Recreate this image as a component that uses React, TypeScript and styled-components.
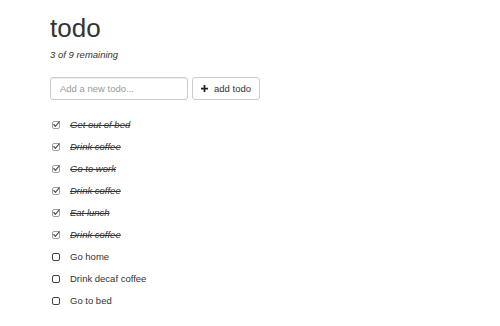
import React, { useState } from 'react'
import styled, { createGlobalStyle } from 'styled-components'

const GlobalStyle = createGlobalStyle`
  html, body {
    margin: 0;
    padding: 0;
    background: #fff;
  }
  body {
    font-family: "Liberation Sans", Arial, Helvetica, sans-serif;
    color: #333;
  }
`

type Todo = { text: string; done: boolean }

const initialTodos: Todo[] = [
  { text: 'Get out of bed', done: true },
  { text: 'Drink coffee', done: true },
  { text: 'Go to work', done: true },
  { text: 'Drink coffee', done: true },
  { text: 'Eat lunch', done: true },
  { text: 'Drink coffee', done: true },
  { text: 'Go home', done: false },
  { text: 'Drink decaf coffee', done: false },
  { text: 'Go to bed', done: false },
]

export default function App() {
  const [todos, setTodos] = useState<Todo[]>(initialTodos)
  const [draft, setDraft] = useState('')

  const remaining = todos.filter((t) => !t.done).length

  const toggle = (i: number) =>
    setTodos(todos.map((t, j) => (j === i ? { ...t, done: !t.done } : t)))

  const add = (e: React.FormEvent) => {
    e.preventDefault()
    if (!draft.trim()) return
    setTodos([...todos, { text: draft.trim(), done: false }])
    setDraft('')
  }

  return (
    <>
      <GlobalStyle />
      <Container>
        <Title>todo</Title>
        <Remaining>
          {remaining} of {todos.length} remaining
        </Remaining>
        <AddForm onSubmit={add}>
          <TodoInput
            placeholder="Add a new todo..."
            value={draft}
            onChange={(e) => setDraft(e.target.value)}
          />
          <AddButton type="submit">
            <PlusIcon viewBox="0 0 8 8">
              <path d="M3 0h2v3h3v2H5v3H3V5H0V3h3z" fill="#222" />
            </PlusIcon>
            add todo
          </AddButton>
        </AddForm>
        <TodoList>
          {todos.map((todo, i) => (
            <TodoRow key={i} onClick={() => toggle(i)}>
              <Box $checked={todo.done}>
                {todo.done && (
                  <CheckMark viewBox="0 0 10 10">
                    <path
                      d="M1.6 4.8 L3.8 7 L8.4 1.6"
                      fill="none"
                      stroke="#555"
                      strokeWidth="1.4"
                    />
                  </CheckMark>
                )}
              </Box>
              <TodoText $done={todo.done}>{todo.text}</TodoText>
            </TodoRow>
          ))}
        </TodoList>
      </Container>
    </>
  )
}

const Container = styled.div`
  padding: 13px 0 0 50px;
`

const Title = styled.h1`
  margin: 0;
  font-size: 26px;
  line-height: 30px;
  font-weight: 400;
  color: #333;
`

const Remaining = styled.p`
  margin: 5px 0 0;
  font-size: 9.5px;
  line-height: 13px;
  font-style: italic;
  color: #333;
`

const AddForm = styled.form`
  display: flex;
  gap: 4px;
  margin-top: 16px;
`

const TodoInput = styled.input`
  box-sizing: border-box;
  width: 138px;
  height: 23px;
  padding: 0 9px;
  border: 1px solid #ccc;
  border-radius: 3px;
  box-shadow: inset 0 1px 1px rgba(0, 0, 0, 0.075);
  font-family: inherit;
  font-size: 9.5px;
  color: #555;
  outline: none;

  &::placeholder {
    color: #999;
  }
`

const AddButton = styled.button`
  box-sizing: border-box;
  display: flex;
  align-items: center;
  gap: 6px;
  width: 68px;
  height: 23px;
  padding: 0 0 0 8px;
  border: 1px solid #ccc;
  border-radius: 3px;
  background: #fff;
  font-family: inherit;
  font-size: 9.5px;
  color: #333;
  cursor: pointer;
`

const PlusIcon = styled.svg`
  width: 7px;
  height: 7px;
`

const TodoList = styled.ul`
  list-style: none;
  margin: 14px 0 0;
  padding: 0;
`

const TodoRow = styled.li`
  display: flex;
  align-items: center;
  height: 22px;
  cursor: pointer;
`

const Box = styled.span<{ $checked: boolean }>`
  position: relative;
  box-sizing: border-box;
  width: 8px;
  height: 8px;
  margin: 0 10px 0 2px;
  border: 1px solid ${(p) => (p.$checked ? '#a0a0a0' : '#444')};
  border-radius: 2px;
  background: #fff;
`

const CheckMark = styled.svg`
  position: absolute;
  left: -1px;
  top: -2px;
  width: 9px;
  height: 9px;
`

const TodoText = styled.span<{ $done: boolean }>`
  font-size: 9.5px;
  line-height: 22px;
  color: #333;
  font-style: ${(p) => (p.$done ? 'italic' : 'normal')};
  text-decoration: ${(p) => (p.$done ? 'line-through' : 'none')};
`
